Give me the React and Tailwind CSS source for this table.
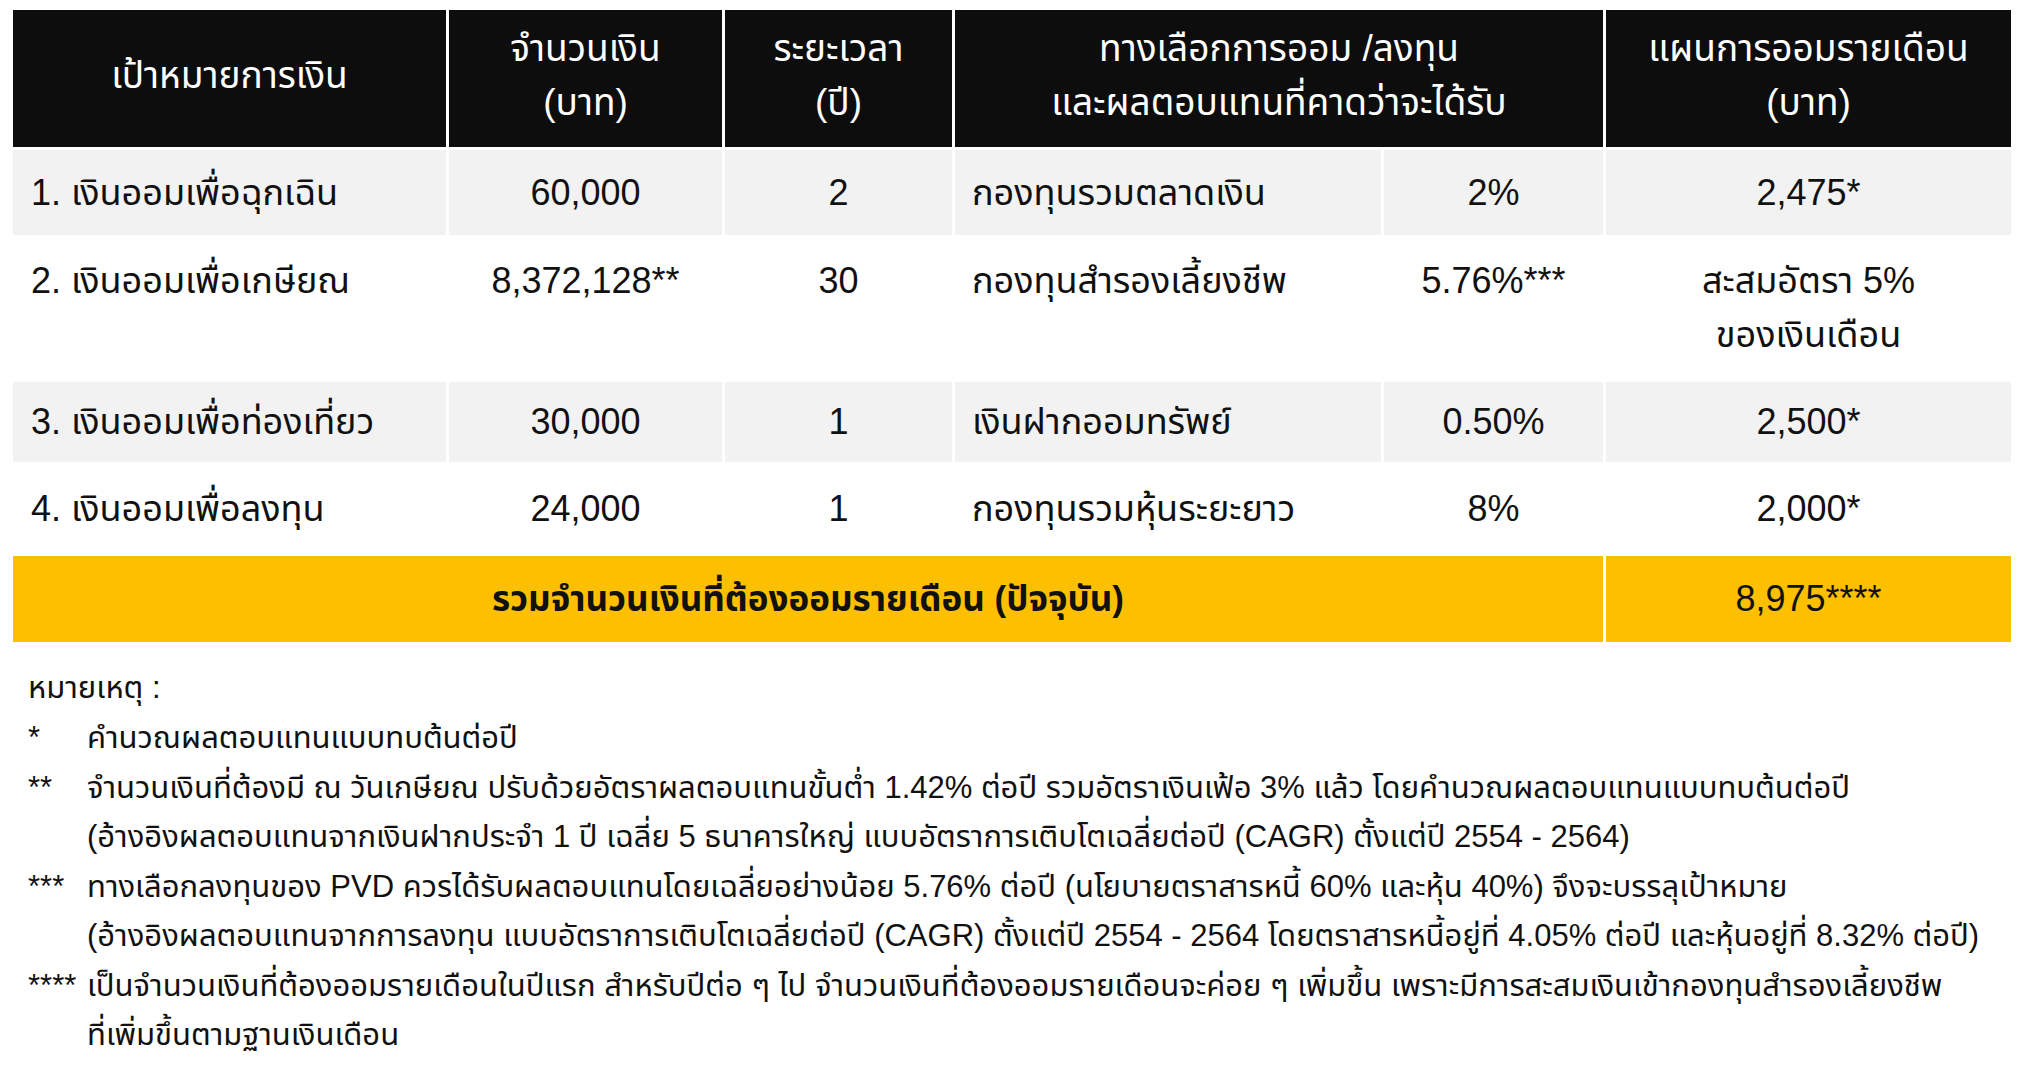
const rows = [
  { goal: "1. เงินออมเพื่อฉุกเฉิน", amount: "60,000", years: "2", option: "กองทุนรวมตลาดเงิน", rate: "2%", plan: ["2,475*"], bg: "bg-[#f2f2f2]" },
  { goal: "2. เงินออมเพื่อเกษียณ", amount: "8,372,128**", years: "30", option: "กองทุนสำรองเลี้ยงชีพ", rate: "5.76%***", plan: ["สะสมอัตรา 5%", "ของเงินเดือน"], bg: "bg-white", top: true },
  { goal: "3. เงินออมเพื่อท่องเที่ยว", amount: "30,000", years: "1", option: "เงินฝากออมทรัพย์", rate: "0.50%", plan: ["2,500*"], bg: "bg-[#f2f2f2]" },
  { goal: "4. เงินออมเพื่อลงทุน", amount: "24,000", years: "1", option: "กองทุนรวมหุ้นระยะยาว", rate: "8%", plan: ["2,000*"], bg: "bg-white" },
];

const notes = [
  { mark: "*", lines: ["คำนวณผลตอบแทนแบบทบต้นต่อปี"] },
  {
    mark: "**",
    lines: [
      "จำนวนเงินที่ต้องมี ณ วันเกษียณ ปรับด้วยอัตราผลตอบแทนขั้นต่ำ 1.42% ต่อปี รวมอัตราเงินเฟ้อ 3% แล้ว โดยคำนวณผลตอบแทนแบบทบต้นต่อปี",
      "(อ้างอิงผลตอบแทนจากเงินฝากประจำ 1 ปี เฉลี่ย 5 ธนาคารใหญ่ แบบอัตราการเติบโตเฉลี่ยต่อปี (CAGR) ตั้งแต่ปี 2554 - 2564)",
    ],
  },
  {
    mark: "***",
    lines: [
      "ทางเลือกลงทุนของ PVD ควรได้รับผลตอบแทนโดยเฉลี่ยอย่างน้อย 5.76% ต่อปี (นโยบายตราสารหนี้ 60% และหุ้น 40%) จึงจะบรรลุเป้าหมาย",
      "(อ้างอิงผลตอบแทนจากการลงทุน แบบอัตราการเติบโตเฉลี่ยต่อปี (CAGR) ตั้งแต่ปี 2554 - 2564 โดยตราสารหนี้อยู่ที่ 4.05% ต่อปี และหุ้นอยู่ที่ 8.32% ต่อปี)",
    ],
  },
  {
    mark: "****",
    lines: [
      "เป็นจำนวนเงินที่ต้องออมรายเดือนในปีแรก สำหรับปีต่อ ๆ ไป จำนวนเงินที่ต้องออมรายเดือนจะค่อย ๆ เพิ่มขึ้น เพราะมีการสะสมเงินเข้ากองทุนสำรองเลี้ยงชีพ",
      "ที่เพิ่มขึ้นตามฐานเงินเดือน",
    ],
  },
];

function Head({ children, span }) {
  return (
    <div className={`bg-[#0d0d0d] text-white text-[37px] flex flex-col items-center justify-center pb-[6px] text-center leading-[54px] ${span || ""}`}>
      {children}
    </div>
  );
}

export default function App() {
  return (
    <div className="min-h-screen bg-white text-[#111] font-['Liberation_Sans','Noto_Sans_Thai','Noto_Sans',sans-serif]">
      <div className="pt-[10px] pl-[13px]">
        <div className="grid grid-cols-[433px_273px_227px_426px_219px_405px] grid-rows-[137px_85px_141px_80px_88px_86px] gap-[3px] text-[36px]">
          <Head>เป้าหมายการเงิน</Head>
          <Head><span>จำนวนเงิน</span><span>(บาท)</span></Head>
          <Head><span>ระยะเวลา</span><span>(ปี)</span></Head>
          <Head span="col-span-2"><span>ทางเลือกการออม /ลงทุน</span><span>และผลตอบแทนที่คาดว่าจะได้รับ</span></Head>
          <Head><span>แผนการออมรายเดือน</span><span>(บาท)</span></Head>

          {rows.map((r) => {
            const align = r.top ? "items-start pt-4" : "items-center";
            return [
              <div key={r.goal + "a"} className={`${r.bg} flex ${align} pl-[18px] leading-[54px]`}>{r.goal}</div>,
              <div key={r.goal + "b"} className={`${r.bg} flex ${align} justify-center leading-[54px]`}>{r.amount}</div>,
              <div key={r.goal + "c"} className={`${r.bg} flex ${align} justify-center leading-[54px]`}>{r.years}</div>,
              <div key={r.goal + "d"} className={`${r.bg} flex ${align} pl-[17px] leading-[54px]`}>{r.option}</div>,
              <div key={r.goal + "e"} className={`${r.bg} flex ${align} justify-center leading-[54px]`}>{r.rate}</div>,
              <div key={r.goal + "f"} className={`${r.bg} flex flex-col ${r.top ? "justify-start pt-4" : "justify-center"} items-center leading-[54px]`}>
                {r.plan.map((p) => <span key={p}>{p}</span>)}
              </div>,
            ];
          })}

          <div className="col-span-5 bg-[#fdc000] flex items-center justify-center font-bold text-[35px]">
            รวมจำนวนเงินที่ต้องออมรายเดือน (ปัจจุบัน)
          </div>
          <div className="bg-[#fdc000] flex items-center justify-center">8,975****</div>
        </div>
      </div>

      <div className="pl-[28px] pt-[21px] text-[31px] leading-[49px]">
        <div>หมายเหตุ :</div>
        {notes.map((n) => (
          <div key={n.mark} className="flex mt-[1px]">
            <div className="w-[59px] shrink-0">{n.mark}</div>
            <div>
              {n.lines.map((l) => (
                <div key={l} className="whitespace-nowrap">{l}</div>
              ))}
            </div>
          </div>
        ))}
      </div>
    </div>
  );
}
